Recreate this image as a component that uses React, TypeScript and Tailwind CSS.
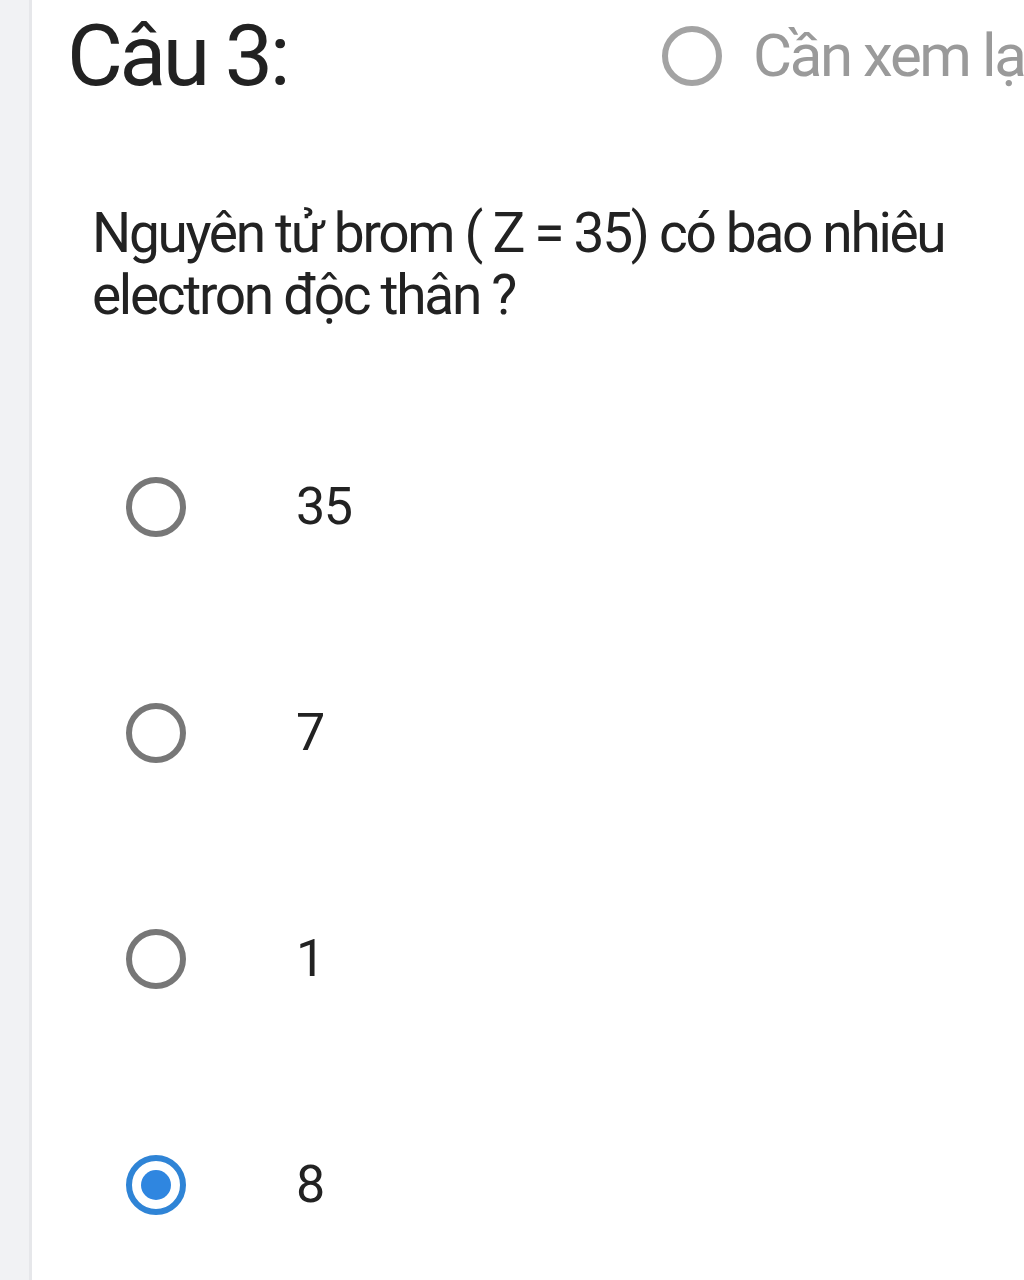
import React from 'react';

const options = ['35', '7', '1', '8'];

const Radio = ({ checked, tone = 'dark' }: { checked?: boolean; tone?: 'dark' | 'light' }) => {
  if (checked) {
    return (
      <div className="w-[60px] h-[60px] rounded-full border-[6px] border-[#2f84d6] flex items-center justify-center shrink-0">
        <div className="w-[30px] h-[30px] rounded-full bg-[#2f86e0]" />
      </div>
    );
  }
  return (
    <div
      className={`w-[60px] h-[60px] rounded-full border-[6px] shrink-0 ${
        tone === 'light' ? 'border-[#a3a3a3]' : 'border-[#777777]'
      }`}
    />
  );
};

export default function App() {
  return (
    <div className="w-[1024px] h-[1280px] flex bg-white overflow-hidden font-['Roboto','Liberation_Sans',sans-serif]">
      <div className="w-[32px] shrink-0 bg-[#f1f2f4] border-r-[3px] border-[#e6e7ea]" />
      <div className="flex-1 min-w-0">
        {/* header */}
        <div className="flex items-center h-[112px] pl-[35px]">
          <h1 className="text-[86px] leading-none text-[#222222] tracking-[-0.04em] w-[595px] shrink-0">Câu 3:</h1>
          <div className="flex items-center gap-[31px] whitespace-nowrap">
            <Radio tone="light" />
            <span className="text-[60px] leading-none text-[#9a9a9a] tracking-[-0.04em]">Cần xem lại</span>
          </div>
        </div>

        {/* question */}
        <p className="mt-[90px] pl-[60px] pr-[20px] text-[55px] leading-[62px] text-[#222222] tracking-[-0.042em]">
          Nguyên tử brom ( Z = 35) có bao nhiêu electron độc thân ?
        </p>

        {/* options */}
        <div className="mt-[151px] flex flex-col gap-[166px] pl-[94px]">
          {options.map((opt, i) => (
            <div key={opt} className="flex items-center h-[60px] gap-[110px]">
              <Radio checked={i === 3} />
              <span className="text-[52px] leading-none text-[#222222] tracking-[-0.03em]">{opt}</span>
            </div>
          ))}
        </div>
      </div>
    </div>
  );
}
